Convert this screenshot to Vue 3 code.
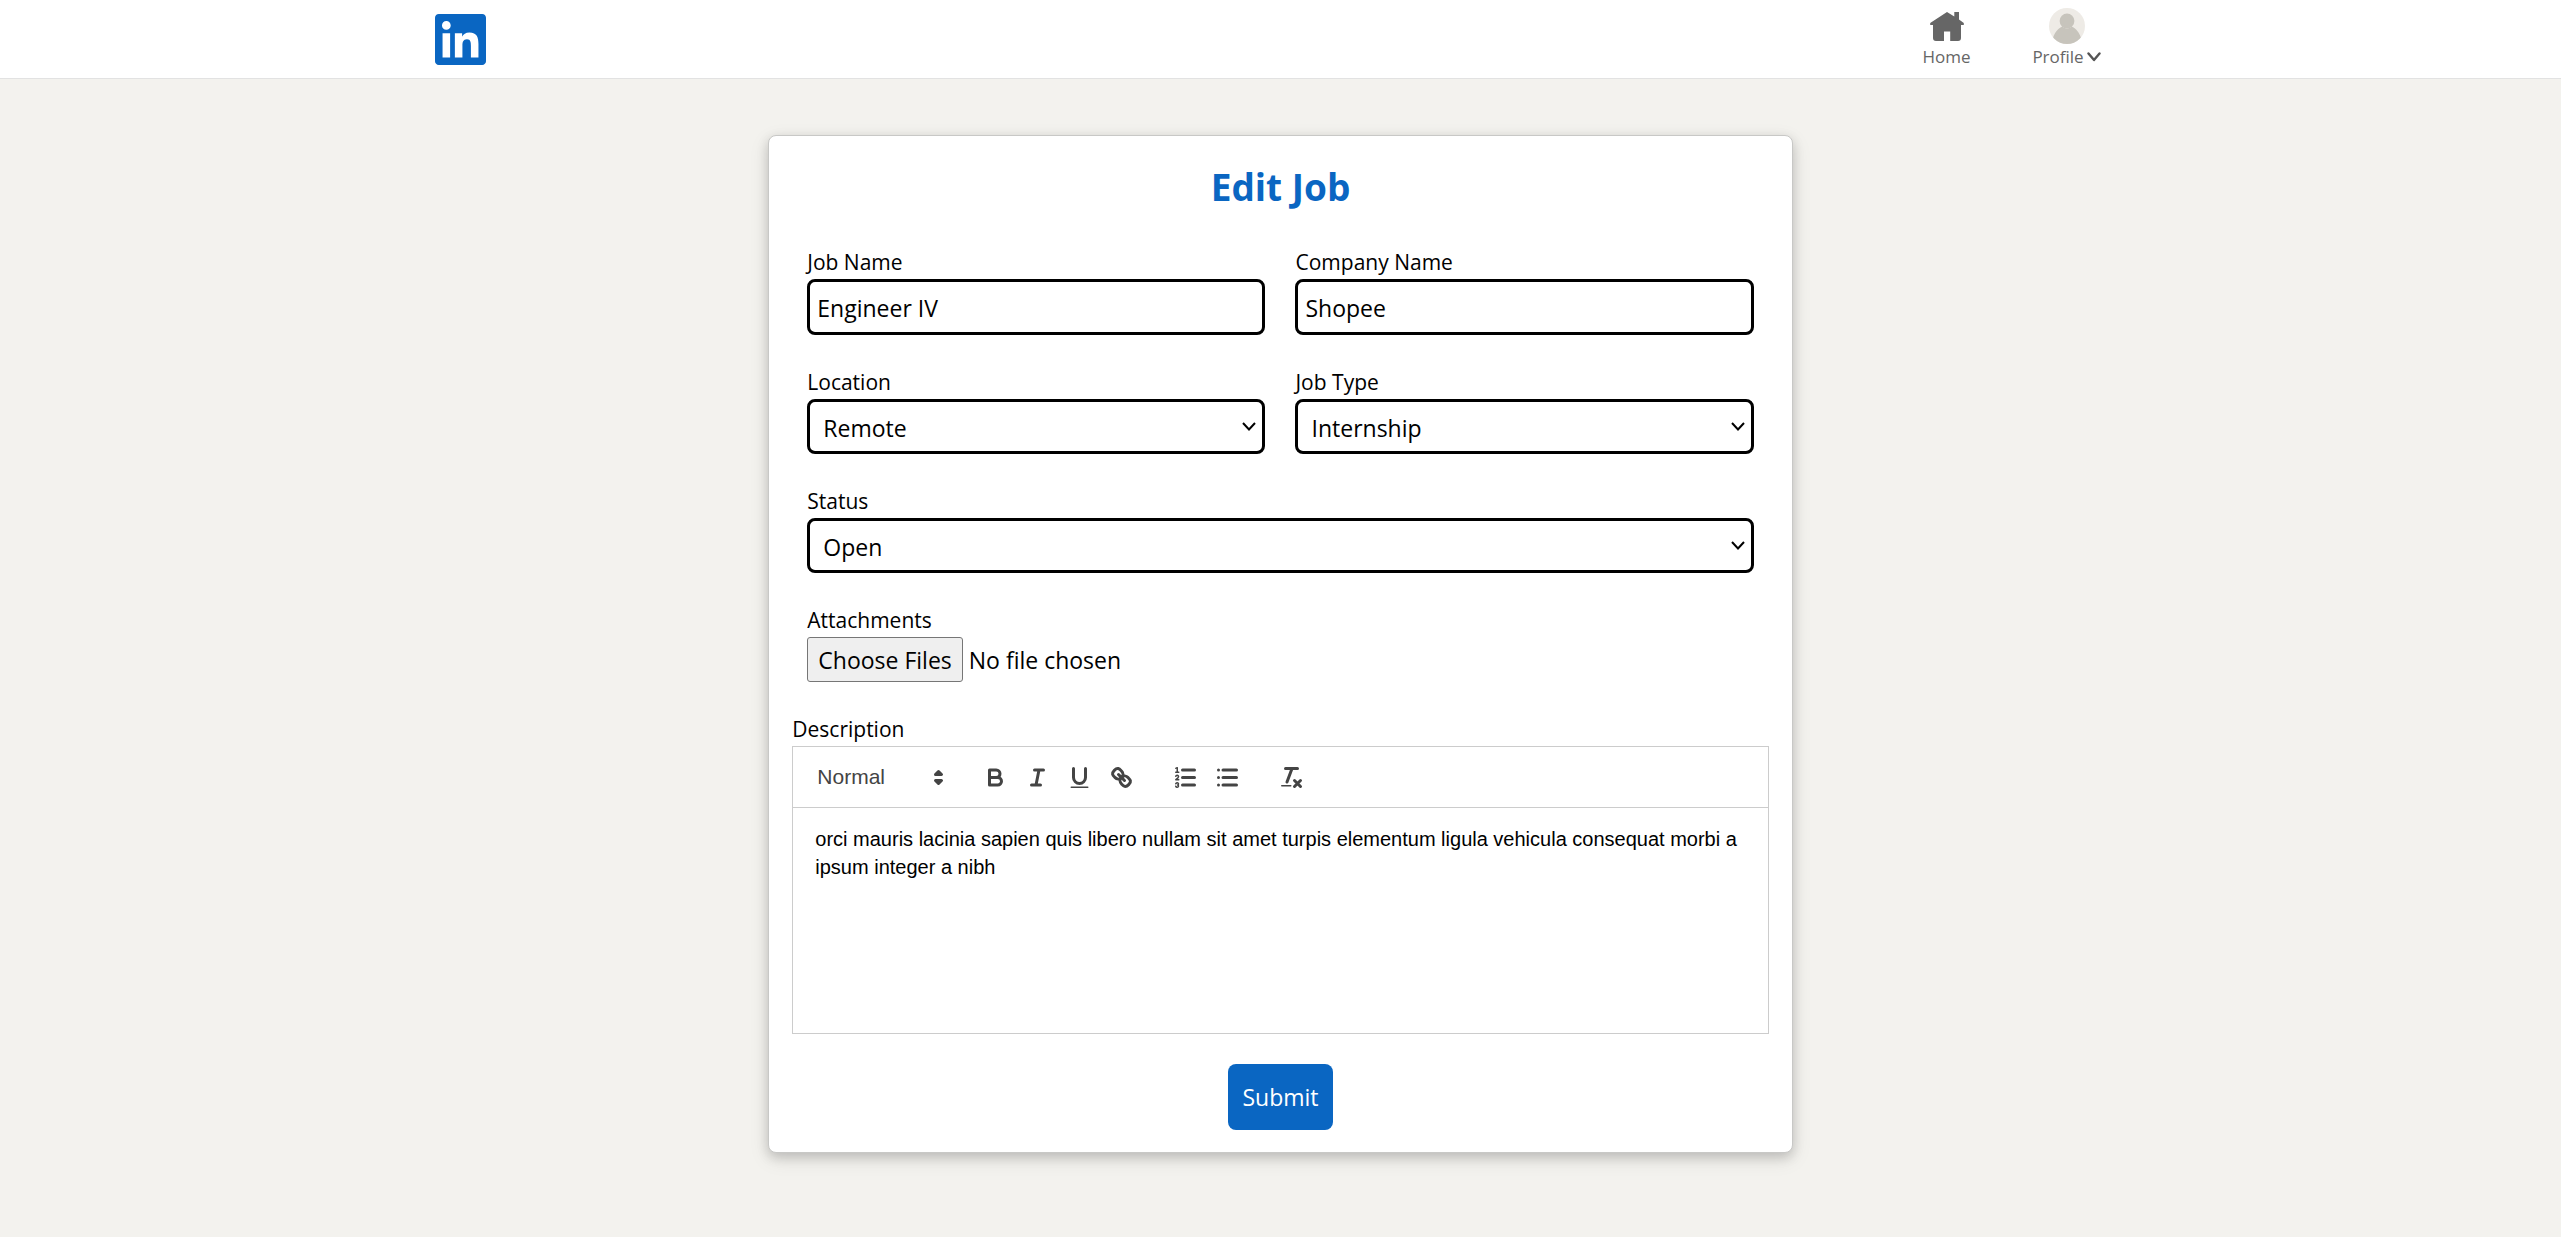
<script setup>
import { reactive } from 'vue'

const job = reactive({
  name: 'Engineer IV',
  company: 'Shopee',
  location: 'Remote',
  type: 'Internship',
  status: 'Open',
  description:
    'orci mauris lacinia sapien quis libero nullam sit amet turpis elementum ligula vehicula consequat morbi a ipsum integer a nibh',
})

const locations = ['Remote', 'On-site', 'Hybrid']
const types = ['Internship', 'Full-time', 'Part-time', 'Contract']
const statuses = ['Open', 'Closed']
</script>

<template>
  <div class="page">
    <header class="topbar">
      <div class="topbar-inner">
        <a class="logo" href="#" aria-label="LinkedIn">
          <svg viewBox="0 0 24 24" aria-hidden="true">
            <path d="M20.447 20.452h-3.554v-5.569c0-1.328-.027-3.037-1.852-3.037-1.853 0-2.136 1.445-2.136 2.939v5.667H9.351V9h3.414v1.561h.046c.477-.9 1.637-1.85 3.37-1.85 3.601 0 4.267 2.37 4.267 5.455v6.286zM5.337 7.433c-1.144 0-2.063-.926-2.063-2.065 0-1.138.92-2.063 2.063-2.063 1.14 0 2.064.925 2.064 2.063 0 1.139-.925 2.065-2.064 2.065zm1.782 13.019H3.555V9h3.564v11.452zM22.225 0H1.771C.792 0 0 .774 0 1.729v20.542C0 23.227.792 24 1.771 24h20.451C23.2 24 24 23.227 24 22.271V1.729C24 .774 23.2 0 22.222 0h.003z" />
          </svg>
        </a>
        <nav class="menu">
          <a class="menu-item" href="#">
            <span class="menu-icon">
              <svg width="34" height="29" viewBox="0 0 34 29" aria-hidden="true">
                <path fill="#666" d="M17 0L24.3 4.6V0H29V7.5L33.8 11V13H31V26a3 3 0 0 1-3 3H20.2V19.5H14V29H6a3 3 0 0 1-3-3V13H.2V11Z" />
              </svg>
            </span>
            <span class="menu-text">Home</span>
          </a>
          <button class="menu-item" type="button">
            <span class="menu-icon">
              <svg width="36" height="36" viewBox="0 0 36 36" aria-hidden="true">
                <defs>
                  <clipPath id="avatar-clip"><circle cx="18" cy="18" r="18" /></clipPath>
                </defs>
                <g clip-path="url(#avatar-clip)">
                  <rect width="36" height="36" fill="#eeebe6" />
                  <circle cx="18" cy="13" r="7.4" fill="#c7c4bc" />
                  <path fill="#c7c4bc" d="M13.5 18.5c1 1 2.6 2 4.500 2s3.500-1 4.500-2c4.500 2 8 6 9.500 11.500V36H4v-6c1.500-5.500 5-9.500 9.500-11.500Z" />
                </g>
              </svg>
            </span>
            <span class="menu-text">
              Profile
              <svg width="14" height="10" viewBox="0 0 14 10" aria-hidden="true">
                <path d="M1.500 1.500L7 8L12.500 1.500" fill="none" stroke="#555" stroke-width="2.400" stroke-linecap="round" stroke-linejoin="round" />
              </svg>
            </span>
          </button>
        </nav>
      </div>
    </header>

    <main class="card">
      <h1>Edit Job</h1>
      <form @submit.prevent>
        <div class="fields">
          <div class="field">
            <label for="job-name">Job Name</label>
            <input id="job-name" v-model="job.name" class="control text" type="text" />
          </div>
          <div class="field">
            <label for="company-name">Company Name</label>
            <input id="company-name" v-model="job.company" class="control text" type="text" />
          </div>
          <div class="field">
            <label for="location">Location</label>
            <div class="select">
              <select id="location" v-model="job.location" class="control">
                <option v-for="o in locations" :key="o">{{ o }}</option>
              </select>
              <svg class="chevron" viewBox="0 0 14 9" aria-hidden="true"><path d="M1 1L7 7.500L13 1" /></svg>
            </div>
          </div>
          <div class="field">
            <label for="job-type">Job Type</label>
            <div class="select">
              <select id="job-type" v-model="job.type" class="control">
                <option v-for="o in types" :key="o">{{ o }}</option>
              </select>
              <svg class="chevron" viewBox="0 0 14 9" aria-hidden="true"><path d="M1 1L7 7.500L13 1" /></svg>
            </div>
          </div>
          <div class="field wide">
            <label for="status">Status</label>
            <div class="select">
              <select id="status" v-model="job.status" class="control">
                <option v-for="o in statuses" :key="o">{{ o }}</option>
              </select>
              <svg class="chevron" viewBox="0 0 14 9" aria-hidden="true"><path d="M1 1L7 7.500L13 1" /></svg>
            </div>
          </div>
          <div class="field wide">
            <label for="attachments">Attachments</label>
            <input id="attachments" class="file" type="file" multiple />
          </div>
        </div>

        <div class="field">
          <label for="description">Description</label>
          <div class="editor">
            <div class="toolbar">
              <div class="picker">
                <select aria-label="Text style">
                  <option>Normal</option>
                  <option>Heading 1</option>
                  <option>Heading 2</option>
                </select>
                <svg class="tool-icon" viewBox="0 0 18 18" aria-hidden="true">
                  <polygon class="stroke" points="7 11 9 13 11 11 7 11" />
                  <polygon class="stroke" points="7 7 9 5 11 7 7 7" />
                </svg>
              </div>
              <div class="tools">
                <button type="button" aria-label="Bold">
                  <svg class="tool-icon" viewBox="0 0 18 18">
                    <path class="stroke" d="M5,4H9.500A2.500,2.500,0,0,1,12,6.500v0A2.500,2.500,0,0,1,9.500,9H5V4Z" />
                    <path class="stroke" d="M5,9h5.500A2.500,2.500,0,0,1,13,11.500v0A2.500,2.500,0,0,1,10.500,14H5V9Z" />
                  </svg>
                </button>
                <button type="button" aria-label="Italic">
                  <svg class="tool-icon" viewBox="0 0 18 18">
                    <path class="stroke" d="M7 4H13M5 14H11M8 14L10 4" />
                  </svg>
                </button>
                <button type="button" aria-label="Underline">
                  <svg class="tool-icon" viewBox="0 0 18 18">
                    <path class="stroke" d="M5,3V9a4.012,4.012,0,0,0,4,4H9a4.012,4.012,0,0,0,4-4V3" />
                    <rect class="fill" height="1" rx="0.5" width="12" x="3" y="15" />
                  </svg>
                </button>
                <button type="button" aria-label="Link">
                  <svg class="tool-icon" viewBox="0 0 18 18">
                    <path class="stroke" d="M7 7L11 11" />
                    <path class="stroke" d="M8.900,4.577a3.476,3.476,0,0,1,.36,4.679A3.476,3.476,0,0,1,4.577,8.900C3.185,7.500,2.035,6.400,4.217,4.217S7.500,3.185,8.900,4.577Z" />
                    <path class="stroke" d="M13.423,9.100a3.476,3.476,0,0,0-4.679-.36,3.476,3.476,0,0,0,.36,4.679c1.392,1.392,2.500,2.542,4.679.36S14.815,10.500,13.423,9.100Z" />
                  </svg>
                </button>
              </div>
              <div class="tools">
                <button type="button" aria-label="Numbered list">
                  <svg class="tool-icon" viewBox="0 0 18 18">
                    <path class="stroke" d="M7 4H15M7 9H15M7 14H15" />
                    <path class="thin" d="M2.500 5.500H4.500" />
                    <path class="fill" d="M3.500,6A0.500,0.500,0,0,1,3,5.500V3.085l-0.276.138A0.500,0.500,0,0,1,2.053,3c-0.124-.247-0.023-0.324.224-0.447l1-.5A0.500,0.500,0,0,1,4,2.500v3A0.500,0.500,0,0,1,3.500,6Z" />
                    <path class="thin" d="M4.500,10.500h-2c0-.234,1.850-1.076,1.850-2.234A0.959,0.959,0,0,0,2.500,8.156" />
                    <path class="thin" d="M2.500,14.846a0.959,0.959,0,0,0,1.850-.109A0.700,0.700,0,0,0,3.750,14a0.688,0.688,0,0,0,.6-0.736,0.959,0.959,0,0,0-1.850-.109" />
                  </svg>
                </button>
                <button type="button" aria-label="Bulleted list">
                  <svg class="tool-icon" viewBox="0 0 18 18">
                    <path class="stroke" d="M6 4H15M6 9H15M6 14H15M3 4H3M3 9H3M3 14H3" />
                  </svg>
                </button>
              </div>
              <div class="tools">
                <button type="button" aria-label="Clear formatting">
                  <svg class="tool-icon" viewBox="0 0 18 18">
                    <path class="stroke" d="M5 3H13M6 12L9.350 3M11 11L15 15M15 11L11 15" />
                    <rect class="fill" height="1" rx="0.5" width="7" x="2" y="14" />
                  </svg>
                </button>
              </div>
            </div>
            <textarea id="description" v-model="job.description" spellcheck="false"></textarea>
          </div>
        </div>

        <button class="submit" type="submit">Submit</button>
      </form>
    </main>
  </div>
</template>

<style>
body {
  margin: 0;
  background: #f3f2ee;
}
</style>

<style scoped>
* {
  box-sizing: border-box;
}

.page {
  min-height: 100vh;
  padding-bottom: 32px;
  background: #f3f2ee;
  color: #000;
  font-family: "Open Sans", "Noto Sans", sans-serif;
}

.topbar {
  background: #fff;
  border-bottom: 1px solid #e2e2e2;
}

.topbar-inner {
  display: flex;
  align-items: center;
  justify-content: space-between;
  max-width: 1692px;
  height: 78px;
  margin: 0 auto;
}

.logo svg {
  display: block;
  width: 51px;
  height: 51px;
  fill: #0a66c2;
}

.menu {
  display: flex;
  height: 100%;
}

.menu-item {
  display: flex;
  flex-direction: column;
  align-items: center;
  width: 120px;
  padding: 8px 0;
  border: 0;
  background: none;
  color: #666;
  font: inherit;
  font-size: 17px;
  line-height: 26px;
  text-decoration: none;
}

.menu-icon {
  display: flex;
  align-items: center;
  height: 36px;
}

.menu-text {
  display: flex;
  align-items: center;
  gap: 3px;
}

.card {
  width: 40%;
  min-width: 720px;
  margin: 56px auto 0;
  padding: 25px 23px 22px;
  border: 1px solid #c8c8c6;
  border-radius: 8px;
  background: #fff;
  box-shadow: 0 4px 12px rgba(0, 0, 0, 0.16), 0 6px 20px rgba(0, 0, 0, 0.1);
}

h1 {
  margin: 0 0 34px;
  color: #0a66c2;
  font-size: 37px;
  font-weight: 700;
  line-height: 52px;
  text-align: center;
}

.fields {
  display: grid;
  grid-template-columns: 1fr 1fr;
  gap: 32px 30px;
  margin: 0 15px 32px;
}

.field {
  display: flex;
  flex-direction: column;
  gap: 2px;
  min-width: 0;
}

.wide {
  grid-column: 1 / -1;
}

label {
  font-size: 21px;
  line-height: 30px;
}

.control {
  width: 100%;
  height: 55px;
  padding: 2px 13px 0;
  border: 3px solid #000;
  border-radius: 8px;
  background: #fff;
  color: #000;
  font: inherit;
  font-size: 23px;
  appearance: none;
}

.text {
  height: 56px;
  padding: 2px 7px 0;
}

.select {
  display: grid;
  align-items: center;
}

.select > * {
  grid-area: 1 / 1;
}

.chevron {
  justify-self: end;
  width: 14px;
  height: 9px;
  margin-right: 9px;
  pointer-events: none;
}

.chevron path {
  fill: none;
  stroke: #000;
  stroke-width: 2px;
}

.file {
  height: 45px;
  font: inherit;
  font-size: 23px;
  line-height: 45px;
}

.file::file-selector-button {
  height: 45px;
  margin: 0 6px 0 0;
  padding: 0 10px;
  border: 1px solid #767676;
  border-radius: 3px;
  background: #efefef;
  color: #000;
  font: inherit;
}

.editor {
  border: 1px solid #ccc;
}

.toolbar {
  display: flex;
  flex-wrap: wrap;
  gap: 22px;
  padding: 12px;
  border-bottom: 1px solid #ccc;
}

.picker {
  display: grid;
  align-items: center;
  width: 147px;
  height: 36px;
}

.picker > * {
  grid-area: 1 / 1;
}

.picker select {
  width: 100%;
  height: 36px;
  padding: 0 12px 2px;
  border: 0;
  background: none;
  color: #444;
  font-family: "Liberation Sans", Arial, sans-serif;
  font-size: 21px;
  appearance: none;
}

.picker .tool-icon {
  justify-self: end;
  pointer-events: none;
}

.tools {
  display: flex;
}

.tools button {
  display: grid;
  place-items: center;
  width: 42px;
  height: 36px;
  padding: 0;
  border: 0;
  background: none;
}

.tool-icon {
  display: block;
  width: 27px;
  height: 27px;
}

.stroke,
.thin {
  fill: none;
  stroke: #444;
  stroke-width: 2px;
  stroke-linecap: round;
  stroke-linejoin: round;
}

.thin {
  stroke-width: 1px;
}

.fill {
  fill: #444;
}

textarea {
  display: block;
  width: 100%;
  height: 225px;
  padding: 17px 22px;
  border: 0;
  background: none;
  color: #000;
  font-family: "Liberation Sans", Arial, sans-serif;
  font-size: 20px;
  line-height: 28px;
  resize: none;
}

.submit {
  display: block;
  height: 66px;
  margin: 30px auto 0;
  padding: 0 14px;
  border: 0;
  border-radius: 8px;
  background: #0a66c2;
  color: #fff;
  font: inherit;
  font-size: 23px;
}
</style>
